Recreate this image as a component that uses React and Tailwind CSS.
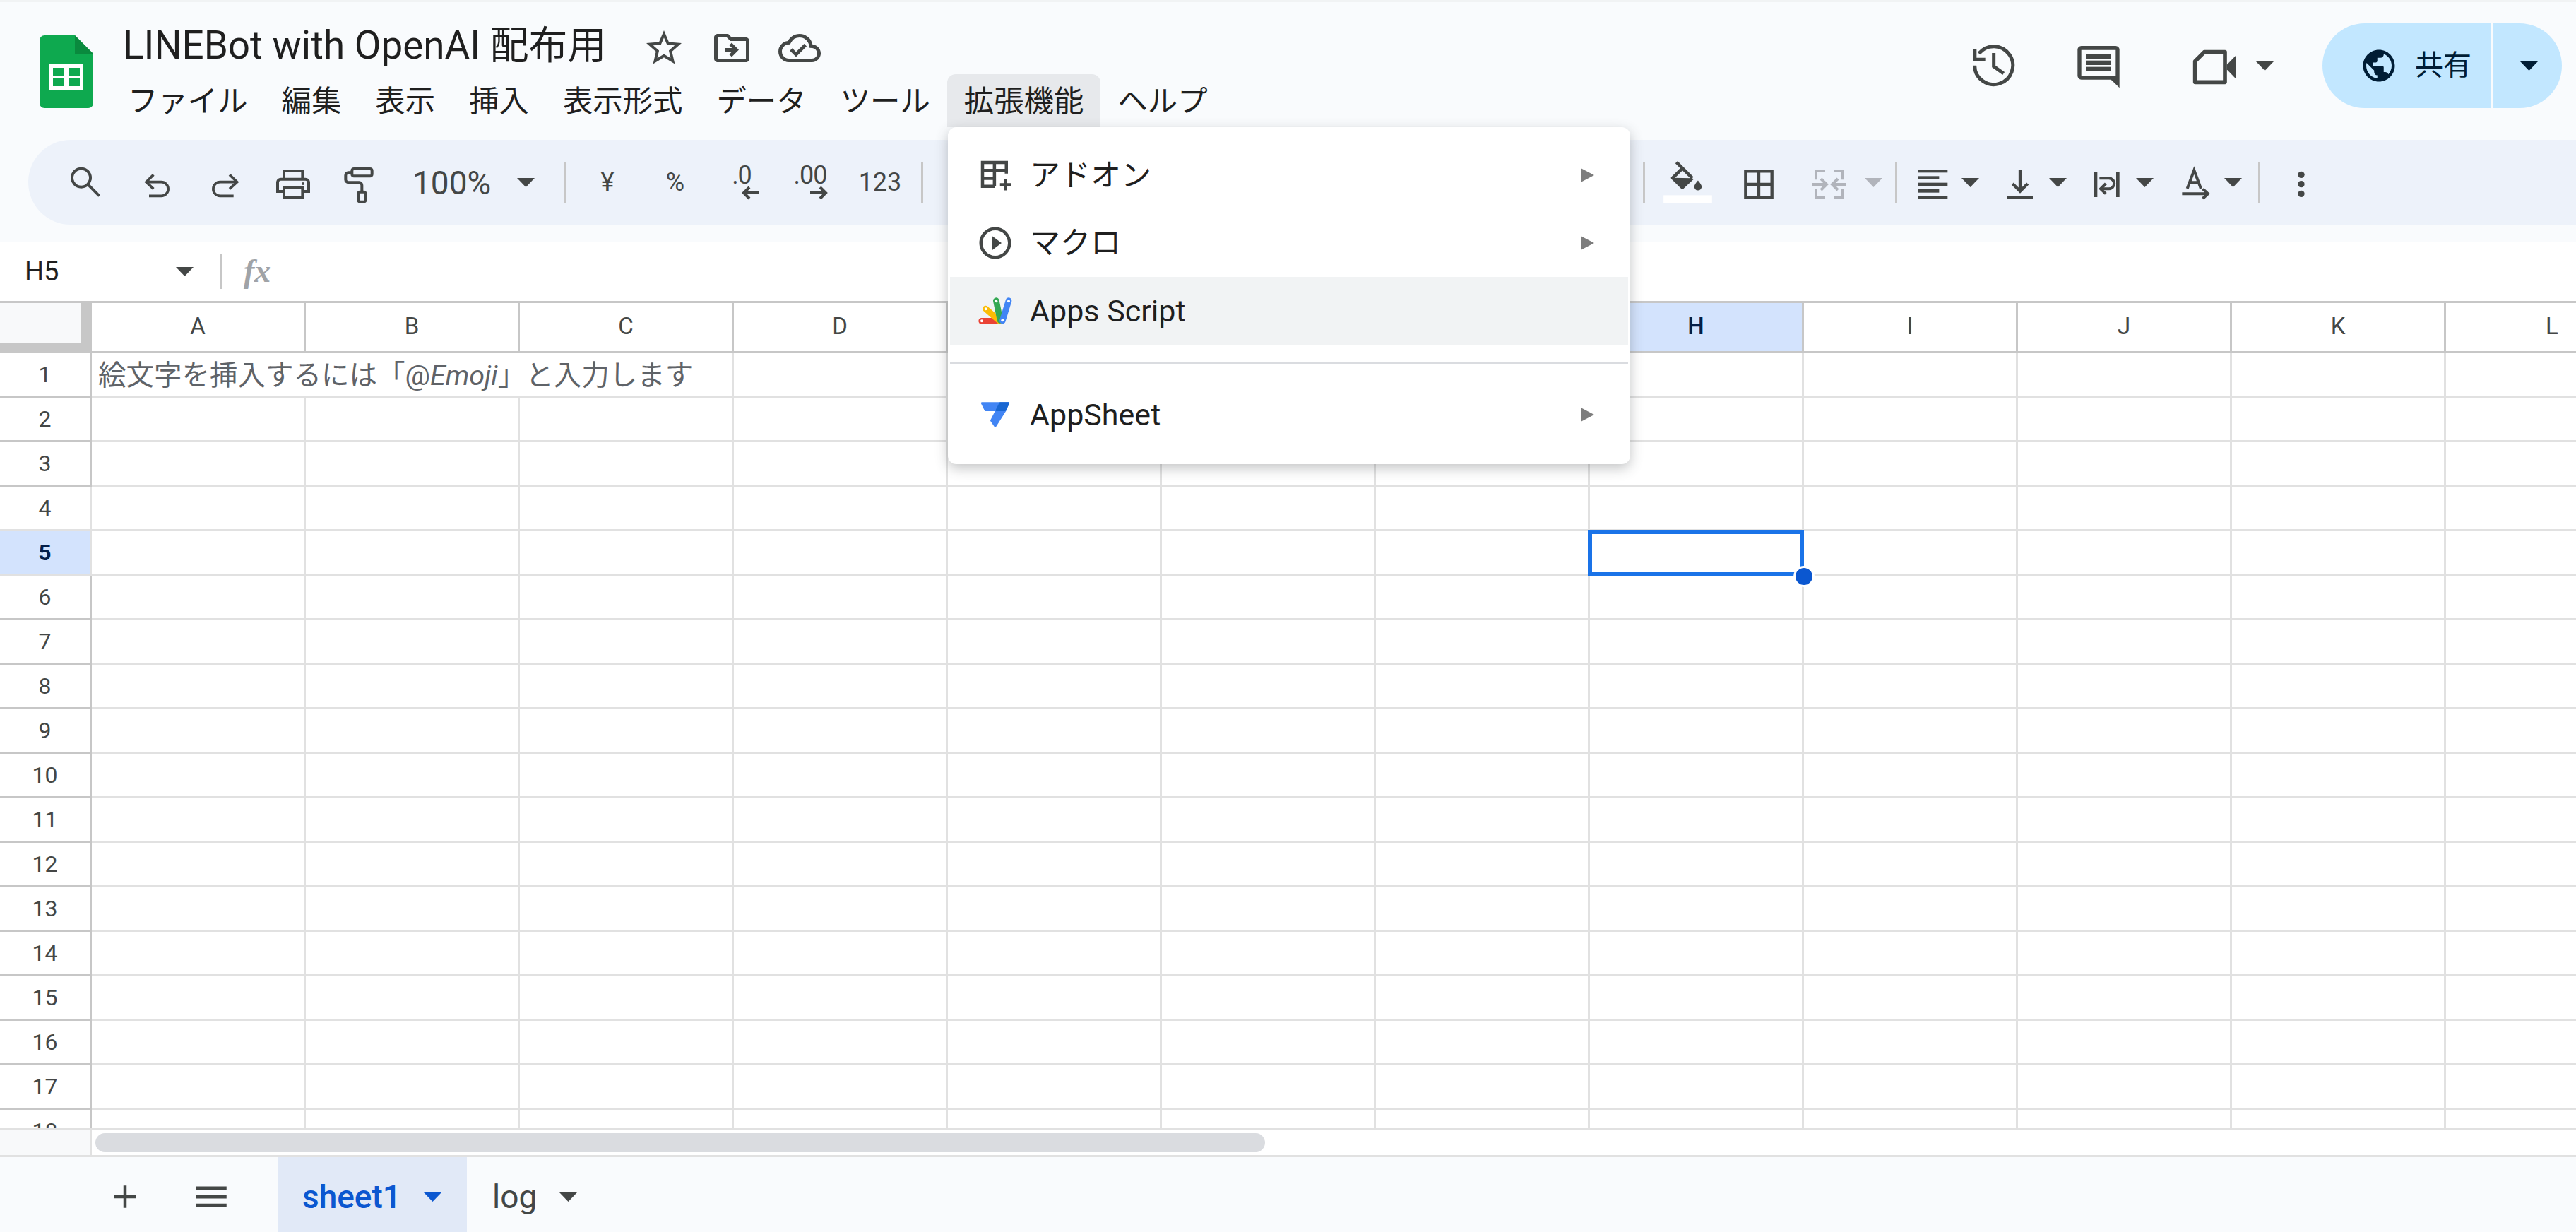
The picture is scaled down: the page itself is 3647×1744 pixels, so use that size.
import React from 'react'
import { MdStarBorder, MdOutlineDriveFileMove, MdOutlineCloudDone, MdPublic, MdAdd, MdMenu, MdPlayCircleOutline } from 'react-icons/md'

const columns = ['A', 'B', 'C', 'D', 'E', 'F', 'G', 'H', 'I', 'J', 'K', 'L']
const rows = Array.from({ length: 18 }, (_, i) => i + 1)
const menus = ['ファイル', '編集', '表示', '挿入', '表示形式', 'データ', 'ツール', '拡張機能', 'ヘルプ']
const INK = '#444746'

const Caret = ({ color = INK }) => (
  <svg width="25" height="13" viewBox="0 0 25 13" className="shrink-0">
    <polygon points="0,0 25,0 12.5,13" fill={color} />
  </svg>
)

const MenuArrow = () => (
  <svg width="19" height="20" viewBox="0 0 19 20" className="shrink-0">
    <polygon points="0,0 19,10 0,20" fill="#7d7d7d" />
  </svg>
)

const Sep = () => <div className="w-[3px] h-[59px] bg-[#c7c7c7] shrink-0" />

// icon drawn in 3x coordinates
const Ico = ({ box, w = 54, h = 54, stroke = INK, sw = 12, children }) => (
  <svg width={w} height={h} viewBox={box} fill="none" stroke={stroke} strokeWidth={sw} className="shrink-0 overflow-visible">
    {children}
  </svg>
)

const SearchIcon = () => (
  <Ico box="39 48 162 162">
    <circle cx="105" cy="110" r="39" />
    <path d="M135 140L182 187" />
  </Ico>
)
const UndoIcon = () => (
  <Ico box="345 48 162 162" sw={11}>
    <path d="M412 97L381 128L412 157" />
    <path d="M381 128H445a29.5 29.5 0 0 1 0 59H393" />
  </Ico>
)
const RedoIcon = () => (
  <Ico box="633 48 162 162" sw={11}>
    <path d="M735 97L767 128L735 157" />
    <path d="M767 128H695a29.5 29.5 0 0 0 0 59H752" />
  </Ico>
)
const PrintIcon = () => (
  <Ico box="924 48 162 162">
    <path d="M966 115V81h79v34" />
    <path d="M966 168H939V130a14 14 0 0 1 14-14H1057a14 14 0 0 1 14 14V168H1045" />
    <rect x="966" y="153" width="79" height="41" />
    <circle cx="1047" cy="135" r="6" fill={INK} stroke="none" />
  </Ico>
)
const PaintIcon = () => (
  <Ico box="1200 48 162 162">
    <rect x="1255" y="72" width="85" height="31" rx="8" />
    <path d="M1255 88H1240a12 12 0 0 0-12 12v18a12 12 0 0 0 12 12H1285a12 12 0 0 1 12 12V170" />
    <rect x="1281" y="170" width="32" height="42" rx="8" />
  </Ico>
)
const FillIcon = () => (
  <Ico box="45 40 207 178" w={69} h={59} sw={14}>
    <path d="M100 42L168 110" />
    <path d="M125 68L84 109L125 150L168 110" strokeLinejoin="round" />
    <polygon points="84,109 168,110 125,150" fill={INK} stroke="none" />
    <path d="M192 120C192 120 176 138 176 146a16 16 0 0 0 32 0C208 138 192 120 192 120z" fill={INK} stroke="none" />
    <rect x="45" y="183" width="207" height="35" fill="#fff" stroke="none" />
  </Ico>
)
const BorderIcon = () => (
  <Ico box="369 48 162 162" sw={13}>
    <rect x="394" y="82" width="112" height="112" />
    <path d="M450 82V194M394 138H506" />
  </Ico>
)
const MergeIcon = () => (
  <Ico box="669 48 162 162" stroke="#b1b4bb">
    <path d="M732 81H693V118M768 81H807V118M732 195H693V158M768 195H807V158" />
    <path d="M678 138H738M714 114L738 138L714 162M822 138H762M786 114L762 138L786 162" />
  </Ico>
)
const AlignIcon = () => (
  <Ico box="1109 48 162 162" sw={0}>
    <g fill={INK}>
      <rect x="1128" y="75" width="126" height="13" />
      <rect x="1128" y="103" width="90" height="13" />
      <rect x="1128" y="131" width="126" height="14" />
      <rect x="1128" y="159" width="90" height="14" />
      <rect x="1128" y="188" width="126" height="13" />
    </g>
  </Ico>
)
const ValignIcon = () => (
  <Ico box="-21 48 162 162" sw={13}>
    <path d="M60 75V165M28 135L60 167L92 135" />
    <path d="M6 194H114" />
  </Ico>
)
const WrapIcon = () => (
  <Ico box="349 48 162 162">
    <path d="M382 84V192M476 84V192" strokeWidth="14" />
    <path d="M398 112H438a22.5 22.5 0 0 1 0 45H404" />
    <path d="M425 135L403 157L425 178" />
  </Ico>
)
const RotateIcon = () => (
  <Ico box="719 48 162 162">
    <path d="M766 156L795 78L824 156M776 130H814" />
    <path d="M744 178H850M832 157L854 178L832 198" />
  </Ico>
)
const MoreIcon = () => (
  <Ico box="1173 48 162 162" sw={0}>
    <g fill={INK}>
      <circle cx="1254" cy="97" r="14" />
      <circle cx="1254" cy="137" r="14" />
      <circle cx="1254" cy="178" r="14" />
    </g>
  </Ico>
)
const HistoryIcon = () => (
  <Ico box="48 51 216 216" w={72} h={72} sw={15}>
    <path d="M77 158A81 81 0 1 0 95 107" />
    <path d="M70 88H85V125H122V140H70z" fill={INK} stroke="none" />
    <path d="M158 105V162L200 192" />
  </Ico>
)
const CommentIcon = () => (
  <Ico box="492 51 216 216" w={72} h={72} sw={0}>
    <g fill={INK}>
      <path fillRule="evenodd" d="M530 75H676a16 16 0 0 1 16 16V253L656 218H530a16 16 0 0 1-16-16V91a16 16 0 0 1 16-16zM530 92V201H676V92z" />
      <rect x="549" y="110" width="108" height="19" />
      <rect x="549" y="137" width="108" height="19" />
      <rect x="549" y="164" width="108" height="19" />
    </g>
  </Ico>
)
const VideoIcon = () => (
  <Ico box="981 51 216 216" w={72} h={72} sw={17}>
    <path d="M1052 101H1140V229H1013V140z" strokeLinejoin="round" />
    <polygon points="1148,155 1185,117 1185,213 1148,175" fill={INK} stroke="none" />
  </Ico>
)

const SheetsLogo = () => (
  <svg width="76" height="103" viewBox="0 0 76 103">
    <path d="M7 0H50L76 26V96a7 7 0 0 1-7 7H7a7 7 0 0 1-7-7V7a7 7 0 0 1 7-7z" fill="#0ea94f" />
    <path d="M50 0L76 26H50z" fill="#0a8a3e" />
    <rect x="14" y="41" width="48" height="36" fill="#fff" />
    <rect x="19" y="46" width="16" height="11" fill="#0ea94f" />
    <rect x="41" y="46" width="16" height="11" fill="#0ea94f" />
    <rect x="19" y="61" width="16" height="11" fill="#0ea94f" />
    <rect x="41" y="61" width="16" height="11" fill="#0ea94f" />
  </svg>
)

const AddonIcon = () => (
  <svg width="54" height="54" viewBox="0 0 24 24" fill="none" stroke={INK} strokeWidth="2">
    <path d="M19 11V4H4v15h8M4 9h15M11.5 4v15M4 14h8" />
    <path d="M18.5 14.5v7M15 18h7" />
  </svg>
)

const AppsScriptLogo = () => (
  <svg width="48" height="38" viewBox="72 63 144 114" strokeLinecap="round" strokeWidth="26">
    <path d="M86 163H160" stroke="#ea4335" />
    <path d="M103 111L162 163" stroke="#fbbc04" />
    <path d="M148 77L165 160" stroke="#34a853" />
    <path d="M201 77L175 162" stroke="#4285f4" />
    <circle cx="87" cy="163" r="6" fill="#fff" />
    <circle cx="104" cy="112" r="6" fill="#fff" />
    <circle cx="148" cy="79" r="6" fill="#fff" />
    <circle cx="201" cy="79" r="6" fill="#fff" />
    <circle cx="175" cy="160" r="6" fill="#fff" />
  </svg>
)

const AppSheetLogo = () => (
  <svg width="44" height="38" viewBox="72 506 136 120" strokeLinejoin="round" strokeWidth="8">
    <path d="M80 514H200L184 546H96z" fill="#4285f4" stroke="#4285f4" />
    <path d="M146 546H186L140 618L122 592z" fill="#4285f4" stroke="#4285f4" />
    <path d="M162 514H200L184 546H146z" fill="#1967d2" stroke="#1967d2" />
  </svg>
)

const DecimalIcon = ({ label, dir }) => (
  <div className="flex flex-col items-end w-[50px]">
    <span className="text-[36px] leading-[30px] tracking-[-1px] text-[#444746] w-full text-center">{label}</span>
    <svg width="25" height="20" viewBox="0 0 25 20" fill="none" stroke={INK} strokeWidth="4">
      {dir === 'left' ? <path d="M25 10H4M11 2l-8 8 8 8" /> : <path d="M0 10h21M14 2l8 8-8 8" />}
    </svg>
  </div>
)

const SplitIcon = ({ children, className }) => (
  <div className={`flex items-center shrink-0 ${className}`}>
    {children}
    <div className="ml-[14px] flex"><Caret /></div>
  </div>
)

const ToolCell = ({ children, className }) => (
  <div className={`flex items-center justify-center shrink-0 ${className}`}>{children}</div>
)

const Toolbar = () => (
  <div className="h-[120px] ml-[40px] pl-[32px] bg-[#edf2fa] rounded-l-[60px] flex items-center text-[#444746] shrink-0">
    <ToolCell className="w-[96px]"><SearchIcon /></ToolCell>
    <ToolCell className="w-[108px]"><UndoIcon /></ToolCell>
    <ToolCell className="w-[84px]"><RedoIcon /></ToolCell>
    <ToolCell className="w-[110px]"><PrintIcon /></ToolCell>
    <ToolCell className="w-[74px]"><PaintIcon /></ToolCell>
    <div className="w-[255px] pl-[40px] flex items-center gap-[37px] shrink-0">
      <span className="text-[46px] pt-[3px]">100%</span>
      <Caret />
    </div>
    <Sep />
    <ToolCell className="w-[116px] text-[36px]">¥</ToolCell>
    <ToolCell className="w-[76px] text-[36px]">%</ToolCell>
    <ToolCell className="w-[112px]"><DecimalIcon label=".0" dir="left" /></ToolCell>
    <ToolCell className="w-[82px]"><DecimalIcon label=".00" dir="right" /></ToolCell>
    <ToolCell className="w-[116px] text-[36px]">123</ToolCell>
    <Sep />
    <div className="w-[1019px] shrink-0" />
    <Sep />
    <ToolCell className="w-[121px]"><FillIcon /></ToolCell>
    <ToolCell className="w-[80px]"><BorderIcon /></ToolCell>
    <div className="w-[153px] pl-[33px] flex items-center gap-[23px] shrink-0">
      <MergeIcon />
      <Caret color="#b1b4bb" />
    </div>
    <Sep />
    <SplitIcon className="w-[124px] ml-[23px]"><AlignIcon /></SplitIcon>
    <SplitIcon className="w-[123px]"><ValignIcon /></SplitIcon>
    <SplitIcon className="w-[125px]"><WrapIcon /></SplitIcon>
    <SplitIcon className="w-[116px]"><RotateIcon /></SplitIcon>
    <Sep />
    <ToolCell className="w-[54px] ml-[31px]"><MoreIcon /></ToolCell>
  </div>
)

const Header = () => (
  <div className="h-[195px] flex justify-between shrink-0">
    <div className="flex items-start">
      <div className="ml-[56px] mt-[47px] flex"><SheetsLogo /></div>
      <div className="ml-[46px] mt-[31px]">
        <div className="h-[60px] -ml-[4px] flex items-center">
          <span className="w-[736px] text-[54.8px] leading-none text-[#1f1f1f] whitespace-nowrap">LINEBot with OpenAI 配布用</span>
          <div className="flex items-center gap-[36px] mt-[8px]">
            <MdStarBorder size={60} color={INK} />
            <MdOutlineDriveFileMove size={60} color={INK} />
            <MdOutlineCloudDone size={60} color={INK} />
          </div>
        </div>
        <div className="mt-[11px] h-[75px] -ml-[21px] flex">
          {menus.map((m) => (
            <div
              key={m}
              className={`px-[24px] pt-[3px] flex items-center text-[42.4px] leading-none text-[#1f1f1f] whitespace-nowrap ${m === '拡張機能' ? 'bg-[#e7e9ec] rounded-t-[12px]' : ''}`}
            >
              {m}
            </div>
          ))}
        </div>
      </div>
    </div>
    <div className="mt-[30px] h-[120px] pr-[20px] flex items-center">
      <HistoryIcon />
      <div className="ml-[76px] flex"><CommentIcon /></div>
      <div className="ml-[91px] flex"><VideoIcon /></div>
      <div className="ml-[25px] flex"><Caret /></div>
      <div className="ml-[69px] flex h-full">
        <div className="w-[239px] pl-[53px] bg-[#c2e7ff] rounded-l-[60px] flex items-center gap-[24px] text-[#001d35] text-[40px]">
          <MdPublic size={54} color="#001d35" />
          <span>共有</span>
        </div>
        <div className="w-[3px] bg-[#f9fbfd]" />
        <div className="w-[97px] bg-[#c2e7ff] rounded-r-[60px] flex items-center pl-[38px]">
          <Caret color="#001d35" />
        </div>
      </div>
    </div>
  </div>
)

const FormulaBar = () => (
  <div className="h-[84px] bg-white flex items-center shrink-0">
    <div className="w-[311px] pl-[35px] pr-[37px] flex items-center justify-between">
      <span className="text-[38px] text-[#1f1f1f]">H5</span>
      <Caret />
    </div>
    <div className="w-[3px] h-[50px] bg-[#c7c7c7]" />
    <span className="ml-[31px] font-['Liberation_Serif',serif] italic font-bold text-[46px] leading-none text-[#a0a3a7]">fx</span>
  </div>
)

const Grid = () => (
  <div className="flex-1 min-h-0 overflow-hidden bg-white border-t-[3px] border-[#c7c7c7]">
    <div className="w-[3766px] grid grid-cols-[130px_repeat(12,303px)] grid-rows-[71px] auto-rows-[63px]">
      {/* corner + column heads */}
      <div className="bg-[#c7c7c7] border-b-[3px] border-[#c7c7c7]">
        <div className="w-[115px] h-[57px] bg-[#f8f9fa]" />
      </div>
      {columns.map((c) => (
        <div
          key={c}
          className={`pb-[3px] flex items-center justify-center text-[33px] border-r-[3px] border-b-[3px] border-[#c7c7c7] ${c === 'H' ? 'bg-[#d3e3fd] text-[#041e49] font-medium' : 'text-[#444746]'}`}
        >
          {c}
        </div>
      ))}
      {rows.map((r) => (
        <React.Fragment key={r}>
          <div
            className={`flex items-center justify-center text-[32px] border-r-[3px] border-b-[3px] ${r === 5 ? 'bg-[#d3e3fd] text-[#041e49] font-bold border-[#e1e1e1]' : r === 4 ? 'text-[#444746] border-[#e1e1e1]' : 'text-[#444746] border-[#c7c7c7]'}`}
          >
            {r}
          </div>
          {r === 1 ? (
            <>
              <div className="col-span-3 pl-[9px] pt-[3px] flex items-center text-[39.5px] text-[#5f6368] whitespace-nowrap border-r-[3px] border-b-[3px] border-[#e1e1e1]">
                <span>絵文字を挿入するには「@<span className="italic">Emoji</span>」と入力します</span>
              </div>
              {columns.slice(3).map((c) => (
                <div key={c} className="border-r-[3px] border-b-[3px] border-[#e1e1e1]" />
              ))}
            </>
          ) : (
            columns.map((c) => (
              <div key={c} className="relative border-r-[3px] border-b-[3px] border-[#e1e1e1]">
                {r === 5 && c === 'H' && (
                  <div className="absolute -left-[3px] -top-[2px] -right-[3px] -bottom-[4px] z-10 border-[6px] border-[#1a73e8]">
                    <div className="absolute -right-[21px] -bottom-[21px] w-[30px] h-[30px] rounded-full bg-[#0b57d0] border-[3px] border-white" />
                  </div>
                )}
              </div>
            ))
          )}
        </React.Fragment>
      ))}
    </div>
  </div>
)

const ScrollBar = () => (
  <div className="h-[41px] bg-white border-y-[3px] border-[#e1e1e1] flex items-center shrink-0">
    <div className="w-[130px] h-full bg-[#f8f9fa] border-r-[3px] border-[#e1e1e1]" />
    <div className="ml-[5px] w-[1656px] h-[27px] rounded-full bg-[#dadce0]" />
  </div>
)

const SheetTabs = () => (
  <div className="h-[106px] shrink-0 bg-[#f9fbfd] flex items-stretch">
    <div className="pl-[150px] pt-[6px] flex items-center">
      <MdAdd size={54} color={INK} />
      <div className="ml-[66px] flex"><MdMenu size={58} color={INK} /></div>
    </div>
    <div className="ml-[65px] w-[268px] pl-[35px] pt-[6px] bg-[#e1e9f7] flex items-center gap-[32px] text-[#0b57d0] text-[46px] font-medium">
      <span>sheet1</span>
      <Caret color="#0b57d0" />
    </div>
    <div className="pl-[36px] pt-[6px] flex items-center gap-[32px] text-[#444746] text-[46px]">
      <span>log</span>
      <Caret />
    </div>
  </div>
)

const MenuItem = ({ icon, label, arrow, active }) => (
  <div className={`h-[96px] pl-[37px] pr-[48px] flex items-center ${active ? 'bg-[#f1f3f4]' : ''}`}>
    <div className="w-[54px] h-[54px] flex items-center justify-center shrink-0">{icon}</div>
    <span className="ml-[22px] flex-1 text-[43px] leading-none text-[#1f1f1f]">{label}</span>
    {arrow && <MenuArrow />}
  </div>
)

const ExtensionsMenu = () => (
  <div className="absolute left-[1342px] top-[180px] z-20 w-[966px] h-[477px] px-[3px] pt-[20px] bg-white rounded-[12px] shadow-[0_6px_18px_rgba(60,64,67,0.3)]">
    <MenuItem icon={<AddonIcon />} label="アドオン" arrow />
    <MenuItem icon={<MdPlayCircleOutline size={58} color={INK} />} label="マクロ" arrow />
    <MenuItem icon={<AppsScriptLogo />} label="Apps Script" active />
    <div className="h-[3px] bg-[#dadce0] my-[24px]" />
    <MenuItem icon={<AppSheetLogo />} label="AppSheet" arrow />
  </div>
)

const App = () => {
  return (
    <div className="relative w-[3647px] h-[1744px] overflow-hidden flex flex-col bg-[#f9fbfd] font-['Roboto','Noto_Sans_CJK_JP',sans-serif]">
      <div className="h-[3px] bg-[#f1f3f4] shrink-0" />
      <Header />
      <Toolbar />
      <div className="h-[24px] shrink-0" />
      <FormulaBar />
      <Grid />
      <ScrollBar />
      <SheetTabs />
      <ExtensionsMenu />
    </div>
  )
}

export default App
